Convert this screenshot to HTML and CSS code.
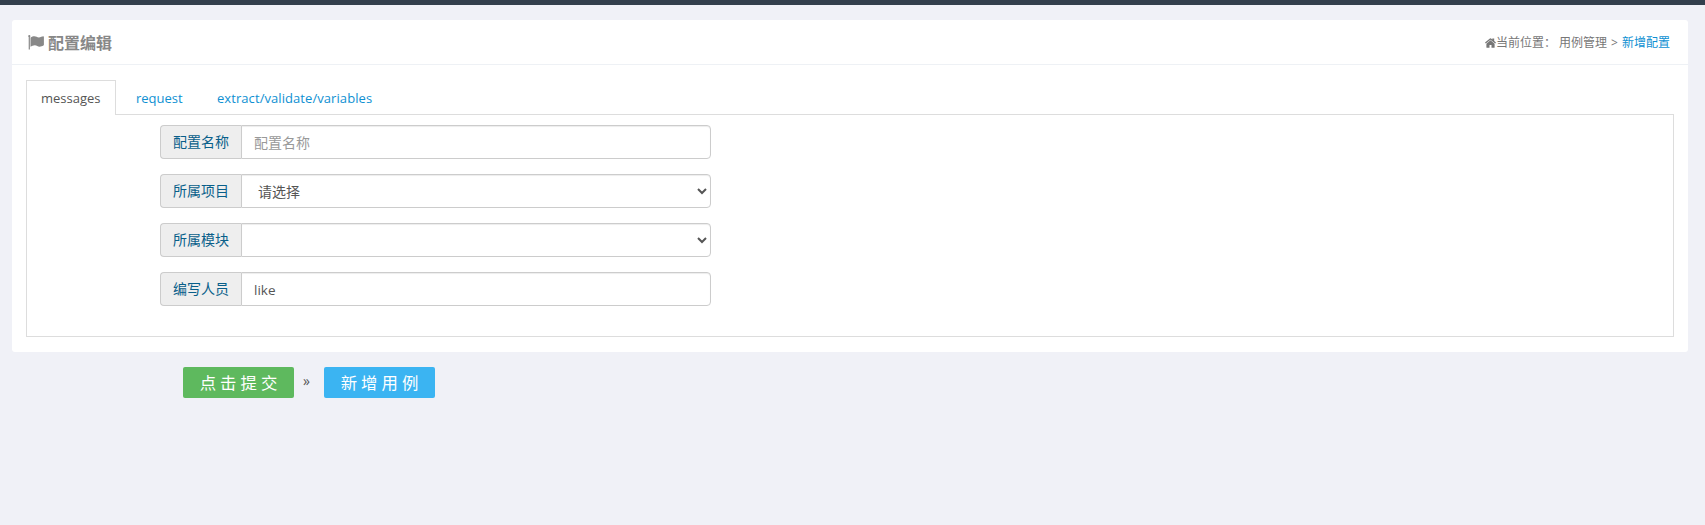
FILE: index.html
```html
<!DOCTYPE html>
<html lang="zh-CN">
<head>
<meta charset="utf-8">
<title>配置编辑</title>
<link rel="stylesheet" href="styles.css">
</head>
<body>
<header class="topbar"></header>
<main class="card">
  <div class="card-head">
    <h1 class="title">
      <svg class="flag" viewBox="0 0 16 15" width="16" height="15"><path fill="currentColor" d="M.2 1.200a1.100 1.100 0 0 1 2.200 0c0 .4-.2.700-.5.900V14.600H.7V2.100C.4 1.900.2 1.600.2 1.200zM2.500 2.600C4 1.700 5 1.300 6.300 1.300c1.900 0 2.900 1.200 4.500 1.200 1.700 0 3.400-1.200 4.500-1.200q.6 0 .6.600v7.900c0 .4-.2.500-.5.700-1.200.6-2.400 1.200-3.800 1.200-1.900 0-2.800-1.400-4.800-1.400-1.500 0-3.100.8-4.300 1.500z"/></svg>
      <span>配置编辑</span>
    </h1>
    <nav class="crumbs">
      <svg class="home" viewBox="0 0 11 10" width="11" height="10"><path fill="currentColor" d="M5.500 2.300 9.600 5.700v3.600q0 .5-.5.500H6.500V6.900h-2v2.900H1.900q-.5 0-.5-.5V5.700zM4.900.4q.6-.5 1.200 0l1.200 1V.5h1.900v2.500L11 4.500l-.8 1-4.700-3.800L.8 5.500 0 4.500z"/></svg><span>当前位置：</span><span class="crumb">用例管理</span><span class="sep">&gt;</span><a class="current">新增配置</a>
    </nav>
  </div>
  <div class="tabs">
    <a class="tab active">messages</a>
    <a class="tab request">request</a>
    <a class="tab long">extract/validate/variables</a>
  </div>
  <form class="panel">
    <div class="group"><label class="label">配置名称</label><input class="field" type="text" placeholder="配置名称"></div>
    <div class="group"><label class="label">所属项目</label><select class="field"><option>请选择</option></select></div>
    <div class="group"><label class="label">所属模块</label><select class="field"></select></div>
    <div class="group"><label class="label">编写人员</label><input class="field" type="text" value="like"></div>
  </form>
</main>
<div class="actions">
  <button class="btn submit">点击提交</button>
  <span class="arrow">»</span>
  <button class="btn create">新增用例</button>
</div>
</body>
</html>
```
FILE: styles.css
```css
* { box-sizing: border-box; }
body {
  margin: 0;
  height: 525px;
  overflow: hidden;
  background: #f0f1f7;
  color: #555;
  font: 13px/20px "Open Sans", "Noto Sans CJK SC", sans-serif;
}
.topbar { height: 5px; background: #333f4d; }
.card {
  margin: 15px 17px 0 12px;
  height: 332px;
  border-radius: 3px;
  background: #fff;
}
.card-head {
  display: flex;
  justify-content: space-between;
  align-items: center;
  height: 45px;
  padding: 2px 18px 0 16px;
  border-bottom: 1px solid #eef1f5;
}
.title {
  display: flex;
  align-items: center;
  gap: 4px;
  margin: 0;
  color: #888;
  font-size: 16px;
  font-weight: 700;
  line-height: 24px;
}
.flag { margin-top: -1px; }
.crumbs { display: flex; align-items: center; color: #777; font-size: 12px; }
.crumb { margin-left: 3px; }
.sep { margin: 0 4px; }
.current { color: #0e90d2; }
.tabs { display: flex; height: 49px; padding: 15px 14px 0; }
.tab {
  height: 34px;
  margin-right: 5px;
  padding: 7px 14px 0;
  border: 1px solid transparent;
  border-bottom: 0;
  color: #0e90d2;
  white-space: nowrap;
}
.tab.active {
  position: relative;
  width: 90px;
  height: 35px;
  border-color: #ddd;
  background: #fff;
  color: #555;
}
.tab.request { width: 76px; }
.tab.long { letter-spacing: .07px; }
.panel {
  display: flex;
  flex-direction: column;
  gap: 15px;
  height: 223px;
  margin: 0 14px;
  padding: 10px 0 0 133px;
  border: 1px solid #ddd;
}
.group { display: flex; width: 551px; height: 34px; }
.label {
  width: 81px;
  padding: 6px 0 0 12px;
  border: 1px solid #ccc;
  border-right: 0;
  border-radius: 4px 0 0 4px;
  background: #eee;
  color: #095f8a;
  font-size: 14px;
}
.field {
  flex: 1;
  min-width: 0;
  height: 34px;
  padding: 2px 12px 0;
  border: 1px solid #ccc;
  border-radius: 0 4px 4px 0;
  background: #fff;
  box-shadow: inset 0 1px 1px rgba(0, 0, 0, .075);
  color: #555;
  font: 14px "Open Sans", "Noto Sans CJK SC", sans-serif;
}
input.field { font-size: 13.500px; }
input.field::placeholder { color: #999; font-size: 14px; }
select.field { padding: 1px 0 0 12px; }
.actions { display: flex; align-items: center; margin: 15px 0 0 183px; height: 31px; }
.btn {
  width: 111px;
  height: 31px;
  padding: 1px 0 0 4px;
  border: 0;
  border-radius: 2px;
  color: #fff;
  font: 16.400px/30px "Open Sans", "Noto Sans CJK SC", sans-serif;
  letter-spacing: 4px;
}
.submit { background: #5eb95e; }
.create { background: #3bb4f2; }
.arrow { width: 30px; padding: 0 0 3px 9px; font-size: 14px; }
```
